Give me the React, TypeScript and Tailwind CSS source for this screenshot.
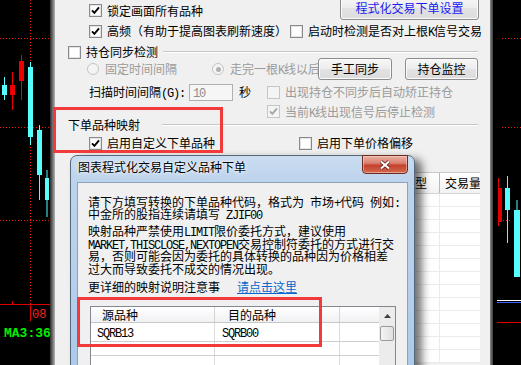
import React from "react";

const ASCII = /^[\x20-\x7e]+$/;

function T({ s, className = "" }: { s: string; className?: string }) {
  const parts = s.match(/[\x20-\x7e]+|[^\x20-\x7e]+/g) || [];
  return (
    <span className={"whitespace-pre " + className}>
      {parts.map((p, i) =>
        ASCII.test(p) ? (
          <span key={i} className="font-['Liberation_Mono',monospace] text-[12px] leading-[0px] tracking-[-1.2px]">
            {p}
          </span>
        ) : (
          <span key={i}>{p}</span>
        )
      )}
    </span>
  );
}

function Check({ checked = false, disabled = false }: { checked?: boolean; disabled?: boolean }) {
  return (
    <span
      className={
        "inline-flex h-[13px] w-[13px] shrink-0 items-center justify-center border " +
        (disabled
          ? "border-[#c6c6c6] bg-[#f4f4f4]"
          : "border-[#8a8a8a] bg-white shadow-[inset_0_0_0_1px_#e4e4e4]")
      }
    >
      {checked && (
        <svg width="9" height="9" viewBox="0 0 9 9">
          <path
            d="M1 4.3 L3.4 6.9 L8 1.4"
            fill="none"
            stroke={disabled ? "#a6a6a6" : "#000"}
            strokeWidth="1.9"
          />
        </svg>
      )}
    </span>
  );
}

function Radio({ checked = false }: { checked?: boolean }) {
  return (
    <span className="inline-flex h-[12px] w-[12px] shrink-0 items-center justify-center rounded-full border border-[#c4c4c4] bg-[#f4f4f4]">
      {checked && <span className="h-[5px] w-[5px] rounded-full bg-[#b0b0b0]" />}
    </span>
  );
}

function Btn({ children, className = "" }: { children: React.ReactNode; className?: string }) {
  return (
    <div
      className={
        "flex shrink-0 items-center justify-center rounded-[3px] border border-[#8c8c8c] bg-[linear-gradient(#f7f7f7,#ececec_50%,#e2e2e2_51%,#dcdcdc)] shadow-[inset_0_0_0_1px_#fbfbfb] " +
        className
      }
    >
      {children}
    </div>
  );
}

function LeftChart() {
  return (
    <div className="h-full w-[50px] shrink-0 bg-black">
      <svg width="50" height="365" viewBox="0 0 50 365">
        <g stroke="#ff1010" strokeWidth="1" strokeDasharray="1 2">
          <line x1="30.5" y1="0" x2="30.5" y2="304" />
          <line x1="0" y1="38.5" x2="50" y2="38.5" />
          <line x1="0" y1="127.5" x2="50" y2="127.5" />
          <line x1="0" y1="220.5" x2="50" y2="220.5" />
        </g>
        <g stroke="#55ffff" strokeWidth="1">
          <line x1="4.5" y1="77" x2="4.5" y2="100" />
          <line x1="30.5" y1="62" x2="30.5" y2="145" />
          <line x1="39.5" y1="125" x2="39.5" y2="200" />
          <line x1="47" y1="170" x2="47" y2="217" />
        </g>
        <g fill="#55ffff">
          <rect x="2" y="85" width="5" height="10" />
          <rect x="28" y="67" width="5" height="70" />
          <rect x="37" y="130" width="5" height="45" />
          <rect x="45" y="178" width="4" height="22" />
        </g>
        <g stroke="#ee0000" strokeWidth="1">
          <line x1="12.5" y1="72" x2="12.5" y2="110" />
          <line x1="21.5" y1="55" x2="21.5" y2="100" />
        </g>
        <g fill="#ee0000">
          <rect x="10" y="85" width="5" height="10" />
          <rect x="19" y="61" width="5" height="20" />
        </g>
        <line x1="0" y1="304.5" x2="50" y2="304.5" stroke="#e00000" />
        <line x1="12.5" y1="301" x2="12.5" y2="304" stroke="#e00000" />
        <line x1="30.5" y1="304" x2="30.5" y2="321" stroke="#e00000" />
        <text x="32" y="318" fill="#ff2020" fontFamily="Liberation Mono, monospace" fontSize="12">
          08
        </text>
        <text
          x="4"
          y="337"
          fill="#00f000"
          fontFamily="Liberation Mono, monospace"
          fontWeight="bold"
          fontSize="13"
        >
          MA3:36
        </text>
      </svg>
    </div>
  );
}

function RightChart() {
  return (
    <div className="h-full w-[28px] shrink-0 bg-black">
      <svg width="28" height="365" viewBox="0 0 28 365">
        <g stroke="#ff1010" strokeWidth="1" strokeDasharray="1 2">
          <line x1="9" y1="38.5" x2="28" y2="38.5" />
          <line x1="9" y1="127.5" x2="28" y2="127.5" />
          <line x1="10" y1="220.5" x2="19" y2="220.5" />
        </g>
        <line x1="5.5" y1="178" x2="5.5" y2="226" stroke="#e00000" />
        <rect x="5" y="188" width="4" height="34" fill="#e00000" />
        <line x1="14.5" y1="176" x2="14.5" y2="243" stroke="#55ffff" />
        <rect x="12" y="188" width="5" height="22" fill="#55ffff" />
        <line x1="24" y1="200" x2="24" y2="277" stroke="#55ffff" />
        <rect x="21" y="210" width="6" height="67" fill="#55ffff" />
        <line x1="4" y1="300.5" x2="28" y2="300.5" stroke="#ffffff" />
        <line x1="4" y1="302.5" x2="28" y2="302.5" stroke="#3a5cff" />
        <line x1="4" y1="322.5" x2="28" y2="322.5" stroke="#e00000" />
      </svg>
    </div>
  );
}

const GRAY = "text-[#9b9b9b]";

export default function App() {
  const tableRows = Array.from({ length: 13 });
  return (
    <div className="relative flex h-[365px] w-[521px] overflow-hidden bg-[#f0f0f0] font-['Noto_Sans_CJK_SC','Noto_Sans_CJK_JP',sans-serif] text-[12px] leading-[12px] text-black">
      <LeftChart />
      <div className="h-full w-[5px] shrink-0 bg-[linear-gradient(90deg,#2c2c2c,#5e5e5e_40%,#b4b4b4)]" />

      {/* main settings window */}
      <div className="relative flex h-full w-[435px] shrink-0 flex-col bg-[#f0f0f0]">
        {/* row 1 */}
        <div className="flex h-[21px] shrink-0 items-center pl-[34px]">
          <Check checked />
          <T s="锁定画面所有品种" className="ml-[5px]" />
          <Btn className="-mt-[4px] ml-auto mr-[11px] h-[24px] w-[139px] self-start text-[#1c1cf0]">
            程式化交易下单设置
          </Btn>
        </div>
        {/* row 2 */}
        <div className="flex h-[20px] shrink-0 items-center pl-[34px]">
          <div className="flex w-[201px] shrink-0 items-center">
            <Check checked />
            <T s="高频（有助于提高图表刷新速度）" className="ml-[5px]" />
          </div>
          <Check />
          <T s="启动时检测是否对上根K信号交易" className="ml-[5px]" />
        </div>
        {/* row 3 */}
        <div className="flex h-[17px] shrink-0 items-center pl-[13px] pt-[5px]">
          <Check />
          <div className="ml-[5px] w-[72px] shrink-0 whitespace-nowrap">持仓同步检测</div>
          <div className="ml-[5px] mr-[12px] h-0 flex-1 border-t border-b border-t-[#c6c6c6] border-b-white" />
        </div>
        {/* row 4 */}
        <div className="flex h-[22px] shrink-0 items-center pl-[32px]">
          <div className="flex w-[125px] shrink-0 items-center">
            <Radio />
            <T s="固定时间间隔" className={"ml-[6px] " + GRAY} />
          </div>
          <div className="flex w-[106px] shrink-0 items-center whitespace-nowrap">
            <Radio checked />
            <T s="走完一根K线以后" className={"ml-[6px] " + GRAY} />
          </div>
          <Btn className="relative h-[22px] w-[74px]">手工同步</Btn>
          <Btn className="ml-[13px] h-[22px] w-[73px]">持仓监控</Btn>
        </div>
        {/* row 5 */}
        <div className="flex h-[24px] shrink-0 items-center pl-[34px]">
          <div className="w-[100px] shrink-0 whitespace-nowrap">
            <T s="扫描时间间隔(G):" />
          </div>
          <div className="flex h-[17px] w-[44px] shrink-0 items-center border border-[#b0b0b0] bg-[#f6f6f6] pl-[3px] text-[#8d8d8d]">
            <T s="10" />
          </div>
          <div className="ml-[6px] w-[12px] shrink-0">秒</div>
          <div className="ml-[16px] flex items-center">
            <Check disabled />
          </div>
          <T s="出现持仓不同步后自动矫正持仓" className={"ml-[5px] " + GRAY} />
        </div>
        {/* row 6 */}
        <div className="flex h-[15px] shrink-0 items-center pl-[212px]">
          <Check checked disabled />
          <T s="当前K线出现信号后停止检测" className={"ml-[5px] " + GRAY} />
        </div>
        {/* row 7 */}
        <div className="flex h-[12px] shrink-0 items-center pl-[13px]">
          <div className="w-[72px] shrink-0 whitespace-nowrap">下单品种映射</div>
          <div className="ml-[22px] mr-[12px] h-0 flex-1 border-t border-b border-t-[#c6c6c6] border-b-white" />
        </div>
        {/* row 8 */}
        <div className="flex h-[24px] shrink-0 items-center pl-[34px]">
          <div className="flex w-[210px] shrink-0 items-center">
            <Check checked />
            <T s="启用自定义下单品种" className="ml-[5px]" />
          </div>
          <Check />
          <T s="启用下单价格偏移" className="ml-[5px]" />
        </div>

        {/* background list */}
        <div className="ml-[15px] mt-[17px] w-[410px] shrink-0 border-t border-[#c8c8c8] bg-white">
          <div className="flex h-[21px] border-b border-[#d5d5d5] bg-[linear-gradient(#ffffff,#f2f2f2)]">
            <div className="w-[150px] shrink-0 border-r border-[#dcdcdc]" />
            <div className="w-[151px] shrink-0 border-r border-[#dcdcdc]" />
            <div className="flex w-[69px] shrink-0 items-center whitespace-nowrap border-r border-[#b8b8b8] pl-[8px]">
              订单类型
            </div>
            <div className="flex flex-1 items-center overflow-hidden whitespace-nowrap pl-[5px]">交易量</div>
          </div>
          {tableRows.map((_, i) => (
            <div key={i} className="flex h-[13px] border-b border-[#ebebeb]">
              <div className="w-[370px] shrink-0 border-r border-[#ebebeb]" />
            </div>
          ))}
        </div>

        {/* dialog window */}
        <div className="absolute left-[15px] top-[155px] h-[220px] w-[345px] rounded-t-[7px] border border-[#56687c] bg-[linear-gradient(180deg,#cadcf0_0%,#bdd3ec_12%,#b5cfec_60%,#acc9ea_100%)] shadow-[7px_4px_9px_rgba(0,0,0,0.55)]">
          <div className="flex h-[26px] items-center pb-[4px] pl-[7px] [text-shadow:0_0_5px_#ffffff,0_0_2px_#ffffff]">
            图表程式化交易自定义品种下单
          </div>
          <div className="absolute right-[6px] top-[-1px] flex h-[19px] w-[46px] items-center justify-center rounded-b-[4px] border border-[#6a2a20] bg-[linear-gradient(#eab0a3,#d98070_42%,#c4402c_55%,#d36a50)] shadow-[inset_0_0_0_1px_rgba(255,220,210,0.5)]">
            <svg width="12" height="10" viewBox="0 0 12 10">
              <path d="M2 1.5 L10 8.5 M10 1.5 L2 8.5" stroke="#5a2018" strokeWidth="3.6" />
              <path d="M2 1.5 L10 8.5 M10 1.5 L2 8.5" stroke="#ffffff" strokeWidth="2" />
            </svg>
          </div>
          <div className="ml-[6px] mr-[6px] h-[200px] border border-[#8da2b8] bg-[#f0f0f0] pl-[10px] pt-[13px]">
            <div className="h-[12px] whitespace-nowrap">
              <T s="请下方填写转换的下单品种代码，格式为 市场+代码 例如:" />
            </div>
            <div className="h-[12px] whitespace-nowrap">
              <T s="中金所的股指连续请填写 ZJIF00" />
            </div>
            <div className="mt-[5px] h-[12.5px] whitespace-nowrap">
              <T s="映射品种严禁使用LIMIT限价委托方式，建议使用" />
            </div>
            <div className="h-[12.5px] whitespace-nowrap">
              <T s="MARKET,THISCLOSE,NEXTOPEN交易控制符委托的方式进行交" />
            </div>
            <div className="h-[12.5px] whitespace-nowrap">
              <T s="易，否则可能会因为委托的具体转换的品种因为价格相差" />
            </div>
            <div className="h-[12.5px] whitespace-nowrap">
              <T s="过大而导致委托不成交的情况出现。" />
            </div>
            <div className="mt-[6px] flex h-[12px] whitespace-nowrap">
              <span>更详细的映射说明注意事</span>
              <span className="ml-[17px] text-[#0a66cc] underline underline-offset-1">请点击这里</span>
            </div>
            {/* grid */}
            <div className="ml-[2px] mt-[13px] flex h-[70px] w-[306px] border border-[#828790] bg-white">
              <div className="flex w-[288px] flex-col">
                <div className="flex h-[16px] shrink-0 border-b border-[#c8c8c8] bg-[linear-gradient(#ffffff,#f0f1f3)]">
                  <div className="flex w-[124px] items-center border-r border-[#d5d5d5] pl-[11px]">源品种</div>
                  <div className="flex w-[125px] items-center border-r border-[#d5d5d5] pl-[13px]">目的品种</div>
                  <div className="w-[39px]" />
                </div>
                <div className="flex h-[19px] shrink-0 border-b border-[#cfcfcf]">
                  <div className="flex w-[124px] items-center border-r border-[#dcdcdc] pl-[6px]">
                    <T s="SQRB13" />
                  </div>
                  <div className="flex w-[125px] items-center border-r border-[#dcdcdc] pl-[7px]">
                    <T s="SQRB00" />
                  </div>
                </div>
                <div className="flex h-[14px] shrink-0 border-b border-[#cfcfcf]">
                  <div className="w-[124px] border-r border-[#dcdcdc]" />
                  <div className="w-[125px] border-r border-[#dcdcdc]" />
                </div>
                <div className="flex h-[14px] shrink-0">
                  <div className="w-[124px] border-r border-[#dcdcdc]" />
                  <div className="w-[125px] border-r border-[#dcdcdc]" />
                </div>
              </div>
              <div className="flex w-[16px] flex-col bg-[#ececec]">
                <div className="flex h-[17px] items-center justify-center">
                  <svg width="7" height="4" viewBox="0 0 7 4">
                    <path d="M0 4 L3.5 0 L7 4 Z" fill="#404040" />
                  </svg>
                </div>
                <div className="ml-[1px] mt-[2px] h-[15px] w-[14px] rounded-[2px] border border-[#9a9a9a] bg-[linear-gradient(90deg,#f4f4f4,#e0e0e0)]" />
              </div>
            </div>
          </div>
        </div>
      </div>

      <div className="h-full w-[3px] shrink-0 bg-[linear-gradient(90deg,#8a8a8a,#3a3a3a)]" />
      <RightChart />

      {/* red annotation boxes */}
      <div className="absolute left-[53px] top-[107px] h-[46px] w-[170px] border-[3px] border-[#f23a3a]" />
      <div className="absolute left-[77px] top-[297px] h-[50px] w-[245px] border-[3px] border-[#f23a3a]" />
    </div>
  );
}
